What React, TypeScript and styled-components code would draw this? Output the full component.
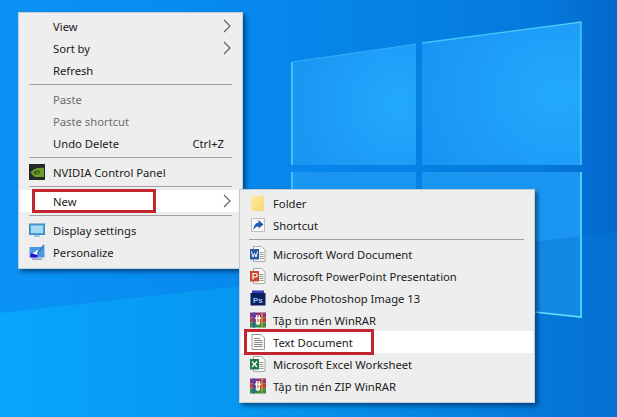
import React from 'react'
import styled, { createGlobalStyle } from 'styled-components'

const GlobalStyle = createGlobalStyle`
    html, body {
        margin: 0;
        padding: 0;
        width: 617px;
        height: 417px;
        overflow: hidden;
        font-family: 'Noto Sans', 'Open Sans', sans-serif;
    }
`

const Wallpaper = () => (
    <WallpaperSvg viewBox="0 0 617 417" width="617" height="417">
        <defs>
            <linearGradient id="base" x1="0" y1="0.5" x2="1" y2="0.5">
                <stop offset="0" stopColor="#0a93f5" />
                <stop offset="0.5" stopColor="#0686ea" />
                <stop offset="0.88" stopColor="#0579dc" />
                <stop offset="1" stopColor="#0467cc" />
            </linearGradient>
            <linearGradient id="floor" x1="0" y1="0" x2="1" y2="0">
                <stop offset="0" stopColor="#08a6fb" />
                <stop offset="0.5" stopColor="#0592ec" />
                <stop offset="1" stopColor="#0470d2" />
            </linearGradient>
            <radialGradient id="pane" cx="0.85" cy="0.5" r="0.9">
                <stop offset="0" stopColor="#23a9ff" />
                <stop offset="1" stopColor="#1994f2" />
            </radialGradient>
            <linearGradient id="edge" x1="0" y1="0" x2="1" y2="0">
                <stop offset="0" stopColor="#4fd4fb" />
                <stop offset="1" stopColor="#5fe0fd" />
            </linearGradient>
        </defs>
        <rect width="617" height="417" fill="url(#base)" />
        <polygon points="0,313 250,285 420,262 581,236 617,232 617,417 0,417" fill="url(#floor)" />
        <polygon points="292,62 416,44 416,165 292,165" fill="url(#pane)" />
        <polygon points="422,43 581,22 581,165 422,165" fill="url(#pane)" />
        <polygon points="292,172 416,172 416,300 292,290" fill="#1a96f2" />
        <polygon points="422,172 581,172 581,317 422,300" fill="#1a96f2" />
        <polygon points="422,255 581,236 581,317 422,300" fill="#1389e6" />
        <path d="M292 62 V165 M292 172 V290" stroke="#42c4f8" strokeWidth="2" fill="none" />
        <path d="M422 43 L581 22 V165" stroke="url(#edge)" strokeWidth="1.4" fill="none" opacity="0.8" />
        <path d="M581 172 V317 L534 312" stroke="#5fe0fd" strokeWidth="1.6" fill="none" />
        <path d="M292 62 L416 44" stroke="#3cbcf6" strokeWidth="1" fill="none" opacity="0.7" />
    </WallpaperSvg>
)

const Chevron = () => (
    <ChevronSvg viewBox="0 0 8 14" width="8" height="14">
        <polyline points="1,1 7,7 1,13" fill="none" stroke="#5a5a5a" strokeWidth="1.1" />
    </ChevronSvg>
)

const NvidiaIcon = () => (
    <svg viewBox="0 0 16 16" width="16" height="16">
        <rect width="16" height="16" fill="#232a26" />
        <path d="M1.5 8.5 C4 4 11 3 15 4 V13 H6 C4.5 12 3 10.5 1.5 8.5Z" fill="#6f9a2c" />
        <path d="M4.5 8.5 C6.5 6 9.5 6 11.5 8 C9.5 10.8 6.5 11 4.5 8.5Z" fill="#3b5518" />
        <path d="M7 8.5 C8 7.5 9 7.5 9.8 8.2 C9 9.5 8 9.5 7 8.5Z" fill="#7fa83a" />
    </svg>
)

const DisplayIcon = () => (
    <svg viewBox="0 0 16 16" width="16" height="16">
        <rect x="0.5" y="2" width="15" height="10.5" fill="#4d9fd6" stroke="#3d8cc4" />
        <rect x="2" y="3.5" width="12" height="7.5" fill="#a5d8f3" />
        <rect x="5" y="13.5" width="6" height="1.4" fill="#7fb6d8" />
    </svg>
)

const PersonalizeIcon = () => (
    <svg viewBox="0 0 16 16" width="16" height="16">
        <rect x="0.5" y="3" width="15" height="10.5" fill="#4a97e4" />
        <rect x="1.5" y="9.5" width="7" height="4" fill="#2413c8" />
        <path d="M3.5 9.5 L9.5 5.5 L8 11Z" fill="#ffffff" />
        <path d="M8.5 9.5 L15 1" stroke="#3a7fc0" strokeWidth="1.8" />
        <rect x="3" y="14.6" width="10" height="1" fill="#6a6ab8" />
    </svg>
)

const FolderIcon = () => (
    <svg viewBox="0 0 16 16" width="16" height="16">
        <defs>
            <linearGradient id="folderFill" x1="0" y1="0" x2="1" y2="1">
                <stop offset="0" stopColor="#fdeaa4" />
                <stop offset="1" stopColor="#fbd96f" />
            </linearGradient>
        </defs>
        <rect x="1" y="0.5" width="13" height="16" fill="url(#folderFill)" />
    </svg>
)

const ShortcutIcon = () => (
    <svg viewBox="0 0 16 16" width="16" height="16">
        <rect x="1.5" y="1.5" width="13" height="13" fill="#f8f8f8" stroke="#c0c0c0" />
        <path d="M3.5 13 C3.5 8.5 5.5 6 8.5 5.8 V3 L13.5 7.5 L8.5 11.5 V9.2 C6.5 9.4 5 10.5 3.5 13Z" fill="#1b5fae" />
    </svg>
)

const Sheet = ({ lines = '#9a9a9a' }: { lines?: string }) => (
    <>
        <path d="M3.5 0.5 H11.5 L15 4 V15.5 H3.5Z" fill="#fbfbfb" stroke="#a8a8a8" />
        <path d="M9.5 6.5 H13.5 M9.5 8.5 H13.5 M9.5 10.5 H13.5 M9.5 12.5 H13.5" stroke={lines} strokeWidth="1" />
    </>
)

const OfficeIcon = ({ color, glyph }: { color: string; glyph: 'w' | 'p' | 'x' }) => (
    <svg viewBox="0 0 16 16" width="16" height="16">
        <Sheet />
        <rect x="0" y="3" width="9" height="10.5" fill={color} />
        {glyph === 'w' && <path d="M1.5 5.5 L3 11 L4.5 7.5 L6 11 L7.5 5.5" stroke="#fff" strokeWidth="1" fill="none" />}
        {glyph === 'p' && <path d="M3 11.5 V5.5 H5.5 A1.7 1.7 0 0 1 5.5 9 H3" stroke="#fff" strokeWidth="1.2" fill="none" />}
        {glyph === 'x' && <path d="M2 5.5 L7 11 M7 5.5 L2 11" stroke="#fff" strokeWidth="1.3" fill="none" />}
    </svg>
)

const PhotoshopIcon = () => (
    <svg viewBox="0 0 16 16" width="16" height="16">
        <rect x="2" y="0.5" width="12" height="3" fill="#3a3ec0" />
        <rect x="0.5" y="3" width="15" height="12.5" fill="#0d1f5c" />
        <text x="3" y="12.5" fontSize="8" fontWeight="700" fill="#8cc8f5" fontFamily="Liberation Sans, sans-serif">Ps</text>
    </svg>
)

const RarIcon = () => (
    <svg viewBox="0 0 16 16" width="16" height="16">
        <rect x="0" y="0.5" width="16" height="5" fill="#8f2f86" />
        <rect x="0" y="5.5" width="16" height="5" fill="#c43a3a" />
        <rect x="0" y="10.5" width="16" height="5" fill="#2f8f48" />
        <rect x="3" y="0.5" width="2" height="15" fill="#3157b8" />
        <rect x="11" y="0.5" width="2" height="15" fill="#c08a2e" />
        <rect x="5" y="5.5" width="6" height="1.5" fill="#f2f0e6" />
        <path d="M6 3 H7.5 V10 H8.5 V3 H10 V11 A2 2 0 0 1 6 11Z" fill="#f4f2e8" />
    </svg>
)

const TextDocIcon = () => (
    <svg viewBox="0 0 16 16" width="16" height="16">
        <path d="M2 0.5 H11 L14.5 4 V15.5 H2Z" fill="#fafafa" stroke="#9a9a9a" />
        <path d="M4 4.5 H10 M4 6.5 H12.5 M4 8.5 H12.5 M4 10.5 H12.5 M4 12.5 H12.5" stroke="#8a8a8a" strokeWidth="1" />
    </svg>
)

type Entry =
    | { kind: 'sep' }
    | { kind: 'item'; label: string; icon?: React.ReactNode; arrow?: boolean; shortcut?: string; disabled?: boolean; active?: boolean; marked?: boolean }

const desktopMenu: Entry[] = [
    { kind: 'item', label: 'View', arrow: true },
    { kind: 'item', label: 'Sort by', arrow: true },
    { kind: 'item', label: 'Refresh' },
    { kind: 'sep' },
    { kind: 'item', label: 'Paste', disabled: true },
    { kind: 'item', label: 'Paste shortcut', disabled: true },
    { kind: 'item', label: 'Undo Delete', shortcut: 'Ctrl+Z' },
    { kind: 'sep' },
    { kind: 'item', label: 'NVIDIA Control Panel', icon: <NvidiaIcon /> },
    { kind: 'sep' },
    { kind: 'item', label: 'New', arrow: true, active: true, marked: true },
    { kind: 'sep' },
    { kind: 'item', label: 'Display settings', icon: <DisplayIcon /> },
    { kind: 'item', label: 'Personalize', icon: <PersonalizeIcon /> },
]

const newMenu: Entry[] = [
    { kind: 'item', label: 'Folder', icon: <FolderIcon /> },
    { kind: 'item', label: 'Shortcut', icon: <ShortcutIcon /> },
    { kind: 'sep' },
    { kind: 'item', label: 'Microsoft Word Document', icon: <OfficeIcon color="#2a5aa8" glyph="w" /> },
    { kind: 'item', label: 'Microsoft PowerPoint Presentation', icon: <OfficeIcon color="#c8472a" glyph="p" /> },
    { kind: 'item', label: 'Adobe Photoshop Image 13', icon: <PhotoshopIcon /> },
    { kind: 'item', label: 'Tập tin nén WinRAR', icon: <RarIcon /> },
    { kind: 'item', label: 'Text Document', icon: <TextDocIcon />, active: true, marked: true },
    { kind: 'item', label: 'Microsoft Excel Worksheet', icon: <OfficeIcon color="#1f7a45" glyph="x" /> },
    { kind: 'item', label: 'Tập tin nén ZIP WinRAR', icon: <RarIcon /> },
]

const MenuRows = ({ entries, callout }: { entries: Entry[]; callout: 'new' | 'text' }) => (
    <>
        {entries.map((entry, i) =>
            entry.kind === 'sep' ? (
                <Separator key={i} />
            ) : (
                <Row key={i} $active={entry.active} $disabled={entry.disabled}>
                    <IconSlot>{entry.icon}</IconSlot>
                    <Label>{entry.label}</Label>
                    {entry.shortcut && <Shortcut>{entry.shortcut}</Shortcut>}
                    {entry.arrow && <Chevron />}
                    {entry.marked && <Callout $variant={callout} />}
                </Row>
            ),
        )}
    </>
)

export default function App() {
    return (
        <Desktop>
            <GlobalStyle />
            <Wallpaper />
            <MainMenu>
                <MenuRows entries={desktopMenu} callout="new" />
            </MainMenu>
            <SubMenu>
                <MenuRows entries={newMenu} callout="text" />
            </SubMenu>
        </Desktop>
    )
}

// Styled component
const Desktop = styled.div`
    position: relative;
    width: 617px;
    height: 417px;
    overflow: hidden;
`

const WallpaperSvg = styled.svg`
    position: absolute;
    inset: 0;
    display: block;
`

const Menu = styled.div`
    position: absolute;
    box-sizing: border-box;
    display: flex;
    flex-direction: column;
    background: #eeeeee;
    border: 1px solid #c2cdd4;
    box-shadow: 3px 3px 4px rgba(0, 30, 70, 0.55);
    color: #1a1a1a;
`

const MainMenu = styled(Menu)`
    left: 18px;
    top: 12px;
    width: 225px;
    height: 257px;
    padding: 2px 1px;
    --icon-left: 9px;
    --text-gap: 8px;
    --sep-left: 9px;
    --sep-right: 9px;
`

const SubMenu = styled(Menu)`
    left: 239px;
    top: 189px;
    width: 296px;
    height: 214px;
    padding: 2px 1px;
    --icon-left: 9px;
    --text-gap: 7px;
    --sep-left: 8px;
    --sep-right: 9px;
`

const Row = styled.div<{ $active?: boolean; $disabled?: boolean }>`
    position: relative;
    display: flex;
    align-items: center;
    flex: 0 0 22px;
    height: 22px;
    padding-left: var(--icon-left);
    padding-right: 9px;
    background: ${(p) => (p.$active ? '#ffffff' : 'transparent')};
    color: ${(p) => (p.$disabled ? '#6d6d6d' : '#1a1a1a')};
    font-size: 11.25px;
`

const IconSlot = styled.span`
    flex: 0 0 16px;
    width: 16px;
    height: 16px;
    margin-right: var(--text-gap);
    svg {
        display: block;
    }
`

const Label = styled.span`
    flex: 1;
    white-space: nowrap;
`

const Shortcut = styled.span`
    margin-right: 8px;
`

const ChevronSvg = styled.svg`
    display: block;
    transform: translateX(-1px);
`

const Separator = styled.div`
    flex: 0 0 1px;
    margin: 3px var(--sep-right) 3px var(--sep-left);
    background: #a2a2a2;
`

const Callout = styled.span<{ $variant: 'new' | 'text' }>`
    position: absolute;
    box-sizing: border-box;
    border: 3px solid #c3252f;
    left: ${(p) => (p.$variant === 'new' ? '12px' : '3px')};
    top: ${(p) => (p.$variant === 'new' ? '-1px' : '-2px')};
    width: ${(p) => (p.$variant === 'new' ? '124px' : '130px')};
    height: ${(p) => (p.$variant === 'new' ? '24px' : '26px')};
`
